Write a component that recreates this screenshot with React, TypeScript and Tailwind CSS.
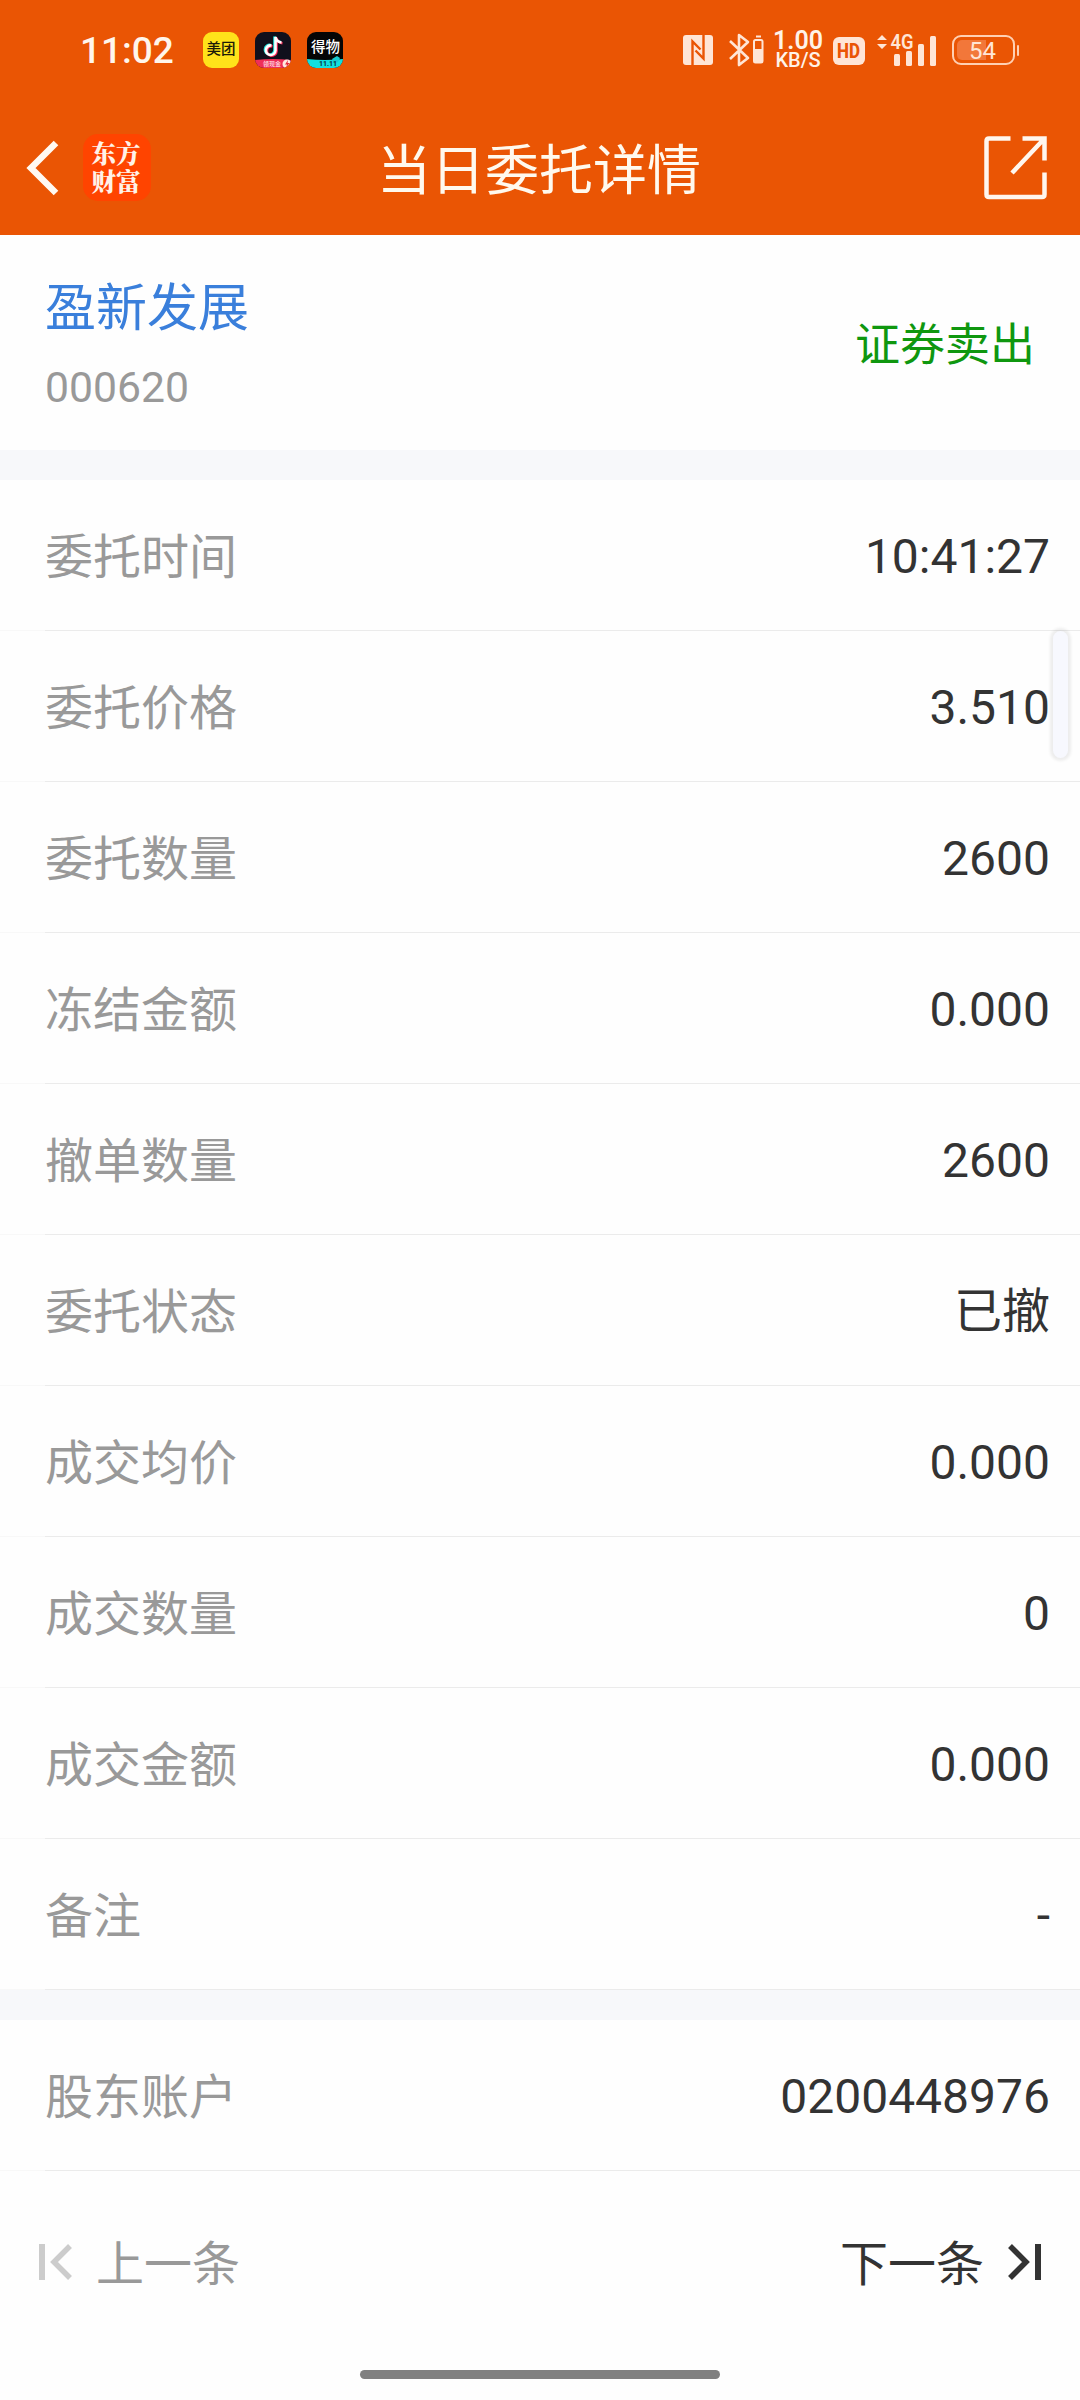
type Item = { label: string; value: string };

const orderRows: Item[] = [
  { label: "委托时间", value: "10:41:27" },
  { label: "委托价格", value: "3.510" },
  { label: "委托数量", value: "2600" },
  { label: "冻结金额", value: "0.000" },
  { label: "撤单数量", value: "2600" },
  { label: "委托状态", value: "已撤" },
  { label: "成交均价", value: "0.000" },
  { label: "成交数量", value: "0" },
  { label: "成交金额", value: "0.000" },
  { label: "备注", value: "-" }
];

const StatusBar = () => {
  return (
    <div className="flex h-[100px] items-center pl-[80px] pr-[61px]">
      <span className="w-[96px] pt-[2px] text-[37px] leading-[44px] font-medium text-[#fff6ec] whitespace-nowrap">
        11:02
      </span>

      {/* APP NOTIFICATIONS */}
      <div className="ml-[27px] flex gap-4">
        <div className="flex size-9 items-center justify-center rounded-[9px] bg-[#ffe31a] text-[14.5px] leading-none font-medium text-[#1c1a08]">
          美团
        </div>
        <svg width="36" height="36" viewBox="0 0 36 36">
          <defs>
            <clipPath id="tile">
              <rect width="36" height="36" rx="9" />
            </clipPath>
          </defs>
          <g clipPath="url(#tile)">
            <rect width="36" height="36" fill="#10101c" />
            <g fill="none" strokeWidth="2.6">
              <path d="M16.500 13.500a4.800 4.800 0 1 0 4 5V5c.5 3.500 2.500 5 6 5.500" stroke="#25e6e0" transform="translate(-1 -.5)" />
              <path d="M16.500 13.500a4.800 4.800 0 1 0 4 5V5c.5 3.500 2.500 5 6 5.500" stroke="#fb2c5a" transform="translate(1 .7)" />
              <path d="M16.500 13.500a4.800 4.800 0 1 0 4 5V5c.5 3.500 2.500 5 6 5.500" stroke="#fff" />
            </g>
            <path d="M0 28q18-2 36 0v8H0z" fill="#ef2f58" />
            <circle cx="32" cy="32" r="4.500" fill="#ffe9df" />
            <path d="M33 28l-3 4.500h2l-1 3.500 3.500-5h-2z" fill="#e8283c" />
            <text x="8" y="33.800" fontSize="6" fontWeight="500" fill="#ffe0e6">领现金</text>
          </g>
        </svg>
        <svg width="36" height="36" viewBox="0 0 36 36">
          <g clipPath="url(#tile)">
            <rect width="36" height="36" fill="#050505" />
            <text x="4" y="20" fontSize="14.500" fontWeight="500" fill="#fff">得物</text>
            <path d="M0 27q18 2 36 0v9H0z" fill="#12e0e0" />
            <path d="M25 27l5-3 3 2-2 4-4 1z" fill="#19c9cf" />
            <text x="12" y="34.300" fontSize="7" fontWeight="700" fill="#062f35">11.11</text>
          </g>
        </svg>
      </div>

      {/* SYSTEM ICONS */}
      <div className="ml-auto flex items-center text-[#ffe5d6]">
        <svg width="30" height="30" viewBox="0 0 30 30" fill="none">
          <rect width="30" height="30" rx="3" fill="currentColor" />
          <path d="M9.500 30V6.500l8 8" stroke="#ea5504" strokeWidth="2.400" />
          <path d="M20.500 0v23.500l-8-8" stroke="#ea5504" strokeWidth="2.400" />
        </svg>
        <svg className="ml-4" width="35" height="34" viewBox="0 0 35 34" fill="none" stroke="currentColor" strokeWidth="2.600">
          <path d="M1 8l18 17-9 7V2l9 7L1 26" strokeLinejoin="round" />
          <rect x="25" y="7" width="8.500" height="22.500" rx="1.500" strokeWidth="2" />
          <path d="M27 3.500h5" strokeWidth="2" />
          <path d="M25 16h8.500v13H25z" fill="currentColor" stroke="none" />
        </svg>
        <div className="ml-[10px] flex w-[48px] flex-col items-center whitespace-nowrap text-[#fff3e8]">
          <span className="text-[25px] leading-[20px] font-semibold">1.00</span>
          <span className="text-[20px] leading-[19px] font-medium">KB/S</span>
        </div>
        <div className="ml-[11px] mt-[2px] flex h-7 w-8 items-center justify-center rounded-md bg-[#ffe5d6] text-[20px] leading-none font-extrabold text-[#ea5504]">
          <span className="scale-x-[0.85]">HD</span>
        </div>
        <svg className="ml-3 overflow-visible" width="60" height="34" viewBox="0 0 60 34" fill="currentColor">
          <path d="M0 7l5-5 5 5zM0 11h10l-5 5z" />
          <rect x="17" y="21" width="6" height="12" rx="1.500" />
          <rect x="29" y="18" width="6" height="15" rx="1.500" />
          <rect x="41" y="11" width="6" height="22" rx="1.500" />
          <rect x="53" y="3" width="6" height="30" rx="1.500" />
          <text x="13.500" y="16" fontSize="20" fontWeight="600" textLength="23" lengthAdjust="spacingAndGlyphs">4G</text>
        </svg>
        <div className="ml-[15px] flex items-center gap-[2px]">
          <div className="flex h-[30px] w-[63px] rounded-[9px] border-2 border-[#ffd0b3] p-[3px]">
            <div className="relative h-full w-[29px] rounded-l-[5px] bg-[#f2773a]">
              <span className="absolute left-[12px] top-[-1px] text-[24px] leading-[24px] text-[#ffe5d6]">54</span>
            </div>
          </div>
          <div className="h-[11px] w-[2px] rounded-sm bg-[#ffd0b3]" />
        </div>
      </div>
    </div>
  );
};

const TitleBar = () => {
  return (
    <div className="flex h-[135px] items-center justify-between px-[26px]">
      <div className="flex w-[200px] items-center gap-[24px]">
        <svg width="33" height="56" viewBox="0 0 33 56" fill="none" stroke="#fff9f2" strokeWidth="6.500">
          <path d="M30 3L5 28l25 25" />
        </svg>
        <div className="flex h-[67px] w-[68px] flex-col items-center rounded-[15px] bg-[#ff4400] pt-[5px] pr-[2px] font-['Noto_Serif_CJK_SC','Noto_Sans_CJK_SC',serif] text-[24.5px] leading-[28px] font-black text-[#fff2e8]">
          <span>东方</span>
          <span>财富</span>
        </div>
      </div>
      <h1 className="pt-[9px] pr-[2px] text-[54px] leading-[72px] text-[#fff9ee]">当日委托详情</h1>
      <div className="flex w-[200px] justify-end pr-[6px]">
        <svg width="64" height="64" viewBox="0 0 64 64" fill="none" stroke="#fff6ee" strokeWidth="4.500">
          <path d="M26.500 2.500H5Q2.500 2.500 2.500 5v53.500q0 2.500 2.500 2.500h53q2.500 0 2.500-2.500V36.500" />
          <path d="M38.500 2.500h22v22M60 3L28 37" />
        </svg>
      </div>
    </div>
  );
};

const Row = ({ label, value }: Item) => {
  return (
    <div className="flex h-[151px] flex-col">
      <div className="flex h-[150px] items-center justify-between pl-[45px] pr-[30px] text-[48px] leading-[60px]">
        <span className="pt-[5px] text-[#999999]">{label}</span>
        <span className="pt-[4px] text-[#333333]">{value}</span>
      </div>
      <div className="flex h-px">
        <div className="w-[45px] bg-[#f8f8f8]" />
        <div className="grow bg-[#ebebeb]" />
      </div>
    </div>
  );
};

const App = () => {
  return (
    <div className="relative flex h-[2400px] w-[1080px] flex-col overflow-hidden bg-[#fefefe] font-[Roboto,'Noto_Sans_CJK_SC',sans-serif]">
      <header className="h-[235px] bg-[#ea5504]">
        <StatusBar />
        <TitleBar />
      </header>

      {/* STOCK */}
      <section className="flex h-[215px] items-center justify-between px-[45px]">
        <div className="flex flex-col pt-[6px]">
          <span className="text-[51px] leading-[76px] text-[#3a7fdb]">盈新发展</span>
          <span className="mt-[7px] text-[42.7px] leading-[66px] text-[#999999]">000620</span>
        </div>
        <span className="pt-[7px] text-[45px] leading-[64px] text-[#0f970f]">证券卖出</span>
      </section>

      <div className="h-[30px] bg-[#f7f8fa]" />
      {orderRows.map((row) => (
        <Row key={row.label} label={row.label} value={row.value} />
      ))}
      <div className="h-[30px] bg-[#f7f8fa]" />
      <Row label="股东账户" value="0200448976" />

      {/* PREV / NEXT */}
      <footer className="flex h-[182px] items-center justify-between px-[39px] text-[48px] leading-[60px]">
        <button className="flex items-center gap-[23px] text-[#999999]">
          <svg width="34" height="36" viewBox="0 0 34 36" fill="none" stroke="#cccccc">
            <path d="M3 0v36" strokeWidth="6" />
            <path d="M31 2L15 18l16 16" strokeWidth="5.500" />
          </svg>
          <span className="pt-[6px]">上一条</span>
        </button>
        <button className="flex items-center gap-[23px] text-[#333333]">
          <span className="pt-[6px]">下一条</span>
          <svg width="34" height="36" viewBox="0 0 34 36" fill="none" stroke="#333333">
            <path d="M31 0v36" strokeWidth="6" />
            <path d="M3 2l16 16L3 34" strokeWidth="5.500" />
          </svg>
        </button>
      </footer>

      {/* HOME INDICATOR */}
      <div className="mx-auto mt-[17px] h-[9px] w-[360px] rounded-full bg-[#808080]" />

      {/* EDGE HANDLE */}
      <div className="absolute left-[1053px] top-[631px] h-[127px] w-[15px] rounded-full bg-[#f7f8fe] shadow-[0_0_3px_3px_rgba(0,0,0,0.07)]" />
    </div>
  );
};

export default App;
